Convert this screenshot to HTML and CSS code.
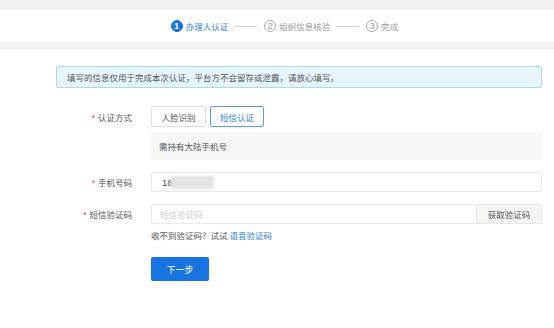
FILE: index.html
```html
<!DOCTYPE html>
<html lang="zh-CN">
<head>
<meta charset="utf-8">
<title>办理人认证</title>
<link rel="stylesheet" href="styles.css">
</head>
<body>
<div class="topgap"></div>
<div class="steps">
  <div class="step active"><span class="num">1</span><span class="label">办理人认证</span></div>
  <span class="line"></span>
  <div class="step"><span class="num">2</span><span class="label">组织信息核验</span></div>
  <span class="line"></span>
  <div class="step"><span class="num">3</span><span class="label">完成</span></div>
</div>
<div class="divider"></div>
<main class="content">
  <div class="alert">填写的信息仅用于完成本次认证，平台方不会留存或泄露，请放心填写。</div>
  <div class="form">
    <div class="row row-method">
      <div class="lbl"><span class="req">*</span>认证方式</div>
      <div class="ctrl">
        <div class="tabs">
          <button class="tab">人脸识别</button>
          <button class="tab selected">短信认证</button>
        </div>
      </div>
    </div>
    <div class="row row-note">
      <div class="lbl"></div>
      <div class="ctrl"><div class="note">需持有大陆手机号</div></div>
    </div>
    <div class="row row-phone">
      <div class="lbl"><span class="req">*</span>手机号码</div>
      <div class="ctrl">
        <div class="input"><span class="val">18</span><span class="val cut">6</span><span class="mask"></span></div>
      </div>
    </div>
    <div class="row row-code">
      <div class="lbl"><span class="req">*</span>短信验证码</div>
      <div class="ctrl">
        <div class="input group"><span class="ph">短信验证码</span><span class="addon">获取验证码</span></div>
      </div>
    </div>
    <div class="row row-help">
      <div class="lbl"></div>
      <div class="ctrl help">收不到验证码？试试 <a class="link">语音验证码</a></div>
    </div>
    <div class="row row-submit">
      <div class="lbl"></div>
      <div class="ctrl"><button class="primary">下一步</button></div>
    </div>
  </div>
</main>
</body>
</html>
```
FILE: styles.css
```css
* { box-sizing: border-box; }
html, body { margin: 0; padding: 0; background: #fff; }
body {
  font-family: "Noto Sans CJK SC", "Noto Sans", sans-serif;
  font-size: 8.5px;
  color: #555;
  width: 554px;
  height: 328px;
  overflow: hidden;
}
.topgap { height: 10px; background: #f2f2f2; }
.steps {
  height: 32px;
  display: flex;
  align-items: center;
  justify-content: center;
  padding-left: 15px;
  background: #fff;
}
.step { display: flex; align-items: center; gap: 3px; color: #999; }
.step .num {
  width: 12px; height: 12px;
  border-radius: 50%;
  border: 1px solid #aaa;
  display: flex; align-items: center; justify-content: center;
  font-family: "Liberation Sans", sans-serif;
  font-size: 9.5px;
  color: #999;
  line-height: 1;
}
.step.active { color: #2a7fe0; }
.step.active .num { background: #1673e0; border-color: #1673e0; color: #fff; font-weight: bold; }
.line { width: 23px; height: 1px; background: #cfd3e6; margin: 0 7px 0 6px; }
.divider { height: 7px; background: #f2f2f2; }
.content { padding: 17px 12px 0 56px; }
.alert {
  height: 22px;
  background: #e6f5fe;
  border: 1px solid #a9d8f8;
  border-radius: 2px;
  padding-left: 10px;
  display: flex; align-items: center;
  color: #555;
}
.form { display: flex; flex-direction: column; }
.row { display: flex; align-items: center; }
.lbl { width: 76px; text-align: right; color: #555; }
.ctrl { flex: 1; margin-left: 19px; }
.req { color: #e83a3a; margin-right: 3px; font-family: "Liberation Sans", sans-serif; }
.row-method { margin-top: 18px; }
.tabs { display: flex; gap: 4px; }
.tab {
  height: 21px; width: 55px;
  border: 1px solid #ddd;
  background: #fff;
  border-radius: 2px;
  font: inherit;
  color: #555;
  padding: 0;
}
.tab.selected { border-color: #5c9de8; color: #2a7fe0; width: 54px; }
.row-note { margin-top: 5px; }
.note { height: 28px; background: #f7f7f7; padding-left: 8px; display: flex; align-items: center; color: #555; }
.row-phone { margin-top: 12px; }
.input {
  height: 20px;
  border: 1px solid #e8e8e8;
  border-radius: 2px;
  display: flex; align-items: center;
  padding-left: 10px;
  position: relative;
  color: #555;
  font-family: "Liberation Sans", sans-serif;
  font-size: 9.5px;
}
.val.cut { color: #bbb; }
.mask {
  position: absolute;
  left: 19px; top: 3px;
  width: 43px; height: 13px;
  background: #e4e4e4;
  filter: blur(1px);
}
.row-code { margin-top: 12px; }
.input.group { padding-left: 0; height: 20px; font-family: inherit; font-size: inherit; }
.ph { flex: 1; padding-left: 8px; color: #ccc; }
.addon {
  width: 65px; height: 100%;
  background: #f5f5f5;
  border-left: 1px solid #e8e8e8;
  display: flex; align-items: center; justify-content: center;
  color: #555;
}
.row-help { margin-top: 5px; }
.help { color: #555; }
.link { color: #2a7fe0; }
.row-submit { margin-top: 16px; }
.primary {
  width: 58px; height: 24px;
  background: #1673e0;
  color: #fff;
  border: none;
  border-radius: 2px;
  font: inherit;
  font-size: 9px;
  padding: 0;
}
```
